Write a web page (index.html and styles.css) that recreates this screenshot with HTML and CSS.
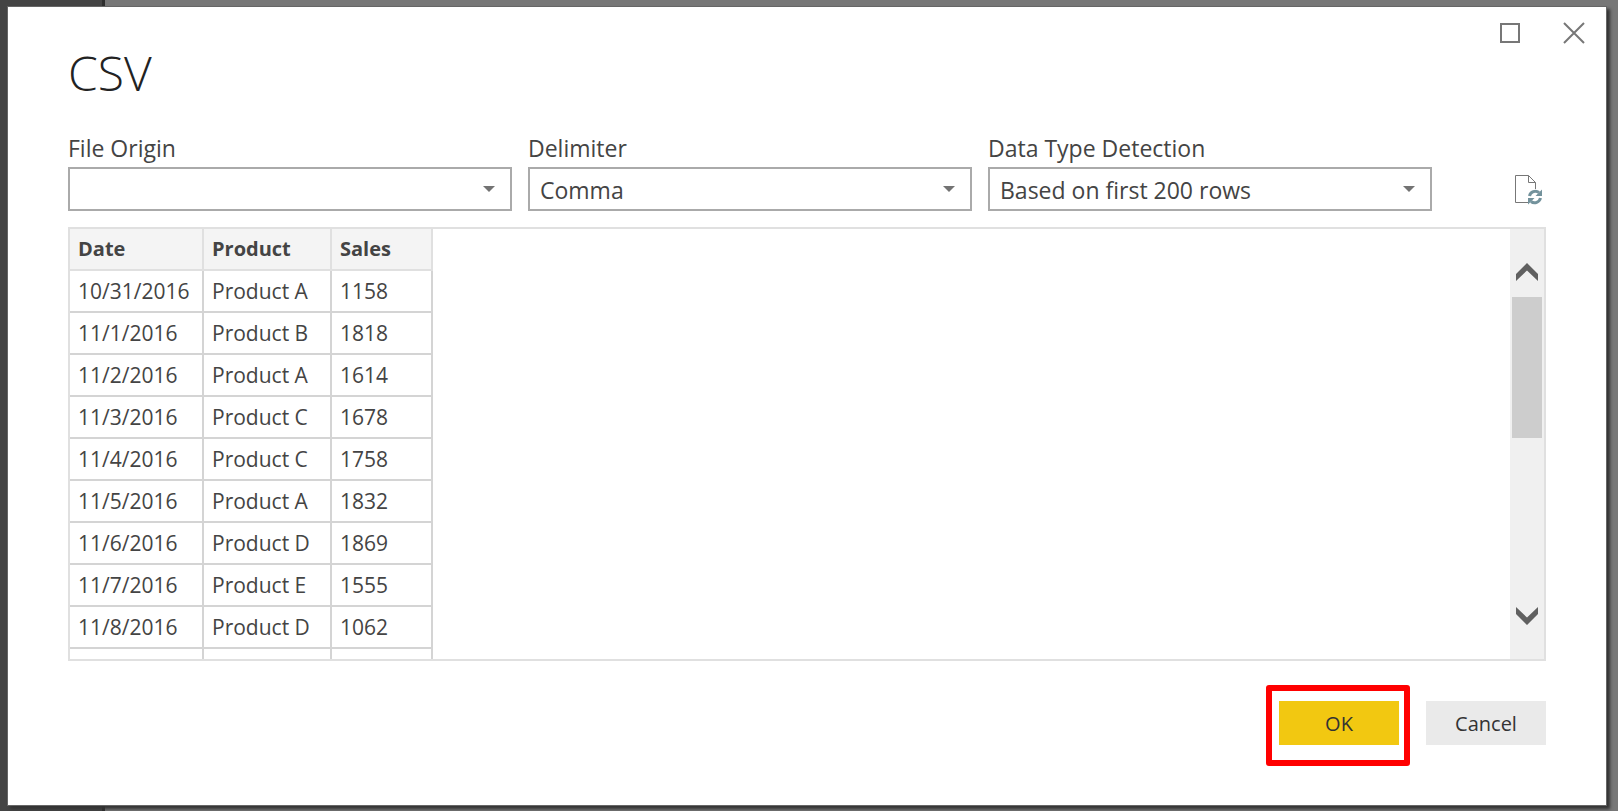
FILE: index.html
```html
<!DOCTYPE html>
<html lang="en">
<head>
<meta charset="utf-8">
<title>CSV</title>
<link rel="stylesheet" href="styles.css">
</head>
<body>
<main class="dialog" role="dialog" aria-labelledby="dialog-title">
  <div class="window-controls">
    <button class="window-button" type="button" aria-label="Maximize">
      <svg width="24" height="24" viewBox="0 0 24 24"><rect x="3" y="3" width="18" height="18" fill="none" stroke="#777" stroke-width="2"/></svg>
    </button>
    <button class="window-button" type="button" aria-label="Close">
      <svg width="24" height="24" viewBox="0 0 24 24"><path d="M2 2L22 22M22 2L2 22" fill="none" stroke="#777" stroke-width="2"/></svg>
    </button>
  </div>
  <h1 class="title" id="dialog-title">CSV</h1>

  <div class="options">
    <div class="field">
      <label class="label" for="origin">File Origin</label>
      <select class="select" id="origin"><option></option></select>
    </div>
    <div class="field">
      <label class="label" for="delimiter">Delimiter</label>
      <select class="select" id="delimiter"><option>Comma</option></select>
    </div>
    <div class="field">
      <label class="label" for="detection">Data Type Detection</label>
      <select class="select" id="detection"><option>Based on first 200 rows</option></select>
    </div>
    <button class="refresh" type="button" aria-label="Refresh preview">
      <svg width="30" height="32" viewBox="0 0 30 32">
        <path d="M15 29.500H2.500V2.500H15.500L22.500 9.500V16M15.500 2.500V9.500H22.500" fill="none" stroke="#777" stroke-width="1"/>
        <path d="M16.500 23A6 6 0 0 1 26 19.500M27.500 25A6 6 0 0 1 18 28.500" fill="none" stroke="#73929c" stroke-width="3"/>
        <path d="M29 16.500V23H22.500ZM15 31.500V25H21.500Z" fill="#73929c"/>
      </svg>
    </button>
  </div>

  <section class="preview" aria-label="Preview">
    <div class="preview-body">
      <table class="table">
        <thead><tr><th class="col-date">Date</th><th class="col-product">Product</th><th class="col-sales">Sales</th></tr></thead>
        <tbody>
          <tr><td>10/31/2016</td><td>Product A</td><td>1158</td></tr>
          <tr><td>11/1/2016</td><td>Product B</td><td>1818</td></tr>
          <tr><td>11/2/2016</td><td>Product A</td><td>1614</td></tr>
          <tr><td>11/3/2016</td><td>Product C</td><td>1678</td></tr>
          <tr><td>11/4/2016</td><td>Product C</td><td>1758</td></tr>
          <tr><td>11/5/2016</td><td>Product A</td><td>1832</td></tr>
          <tr><td>11/6/2016</td><td>Product D</td><td>1869</td></tr>
          <tr><td>11/7/2016</td><td>Product E</td><td>1555</td></tr>
          <tr><td>11/8/2016</td><td>Product D</td><td>1062</td></tr>
          <tr><td></td><td></td><td></td></tr>
        </tbody>
      </table>
    </div>
    <div class="scrollbar">
      <button class="scroll-button scroll-up" type="button" aria-label="Scroll up">
        <svg width="22" height="18" viewBox="0 0 22 18"><path d="M0 11L11 0L22 11V18L11 7.500L0 18Z" fill="#606060"/></svg>
      </button>
      <div class="scroll-track"><div class="scroll-thumb"></div></div>
      <button class="scroll-button scroll-down" type="button" aria-label="Scroll down">
        <svg width="22" height="18" viewBox="0 0 22 18"><path d="M0 0L11 10.500L22 0V7L11 18L0 7Z" fill="#606060"/></svg>
      </button>
    </div>
  </section>

  <footer class="actions">
    <div class="highlight"><button class="button button-primary" type="button">OK</button></div>
    <button class="button button-cancel" type="button">Cancel</button>
  </footer>
</main>
</body>
</html>
```
FILE: styles.css
```css
* { box-sizing: border-box; }

body {
  margin: 0;
  height: 100vh;
  padding: 6px 11px 5px 7px;
  display: flex;
  background: linear-gradient(to right, #444 102px, #2e2e2e 102px, #2e2e2e 105px, #777 105px);
  color: #444;
  font-family: "Open Sans", "Noto Sans", sans-serif;
  font-size: 21px;
  overflow: hidden;
}

button, select { font: inherit; color: inherit; border: 0; border-radius: 0; margin: 0; padding: 0; }
button { background: none; }
svg { display: block; }

.dialog {
  flex: 1;
  min-width: 0;
  display: flex;
  flex-direction: column;
  padding: 14px 60px 39px;
  background: #fff;
  border: 1px solid #666;
  box-shadow: 3px 3px 3px #333;
}

.window-controls {
  display: flex;
  justify-content: flex-end;
  gap: 40px;
  margin-right: -40px;
}

.title {
  margin: 0 0 29px;
  font-size: 48px;
  line-height: 56px;
  font-weight: 300;
  color: #222;
}

.options { display: flex; gap: 16px; align-items: flex-end; }
.field { flex: 0 1 444px; min-width: 0; display: flex; flex-direction: column; }
.label { padding-bottom: 1px; font-size: 23px; line-height: 36px; }

.select {
  appearance: none;
  width: 100%;
  height: 44px;
  padding: 2px 40px 0 10px;
  border: 2px solid #aaa;
  background: #fff url("data:image/svg+xml,%3Csvg xmlns='http://www.w3.org/2000/svg' width='12' height='6'%3E%3Cpath d='M0 0H12L6 6Z' fill='%23737373'/%3E%3C/svg%3E") no-repeat right 15px center;
  font-size: 23px;
}

.refresh { margin: 0 3px 6px auto; }

.preview {
  flex: 1;
  min-height: 0;
  margin-top: 16px;
  display: flex;
  border: 2px solid #e0e0e0;
}
.preview-body { flex: 1; min-width: 0; overflow: hidden; }

.table { border-collapse: separate; border-spacing: 0; table-layout: fixed; width: 363px; }
.table th, .table td {
  height: 42px;
  padding: 0 0 0 8px;
  border-right: 2px solid #d4d4d4;
  border-bottom: 2px solid #d4d4d4;
  text-align: left;
  line-height: 40px;
  white-space: nowrap;
}
.table th { font-size: 20px; font-weight: 700; background: #f4f4f4; border-color: #e0e0e0; }
.col-date { width: 134px; }
.col-product { width: 128px; }
.col-sales { width: 101px; }

.scrollbar { flex: 0 0 34px; display: flex; flex-direction: column; background: #f0f0f0; }
.scroll-button { display: flex; justify-content: center; flex: none; height: 68px; padding-top: 34px; }
.scroll-down { height: 52px; padding-top: 0; }
.scroll-track { flex: 1; padding: 0 2px; }
.scroll-thumb { height: 141px; background: #cdcdcd; }

.actions {
  display: flex;
  justify-content: flex-end;
  align-items: flex-start;
  gap: 16px;
  margin-top: 24px;
}
.highlight { padding: 10px 5px 15px 7px; border: 6px solid #f00; border-radius: 3px; }
.button { display: block; width: 120px; height: 44px; background: #eaeaea; font-size: 20px; color: #333; }
.button-primary { background: #f2c811; }
.button-cancel { margin-top: 16px; }
```
